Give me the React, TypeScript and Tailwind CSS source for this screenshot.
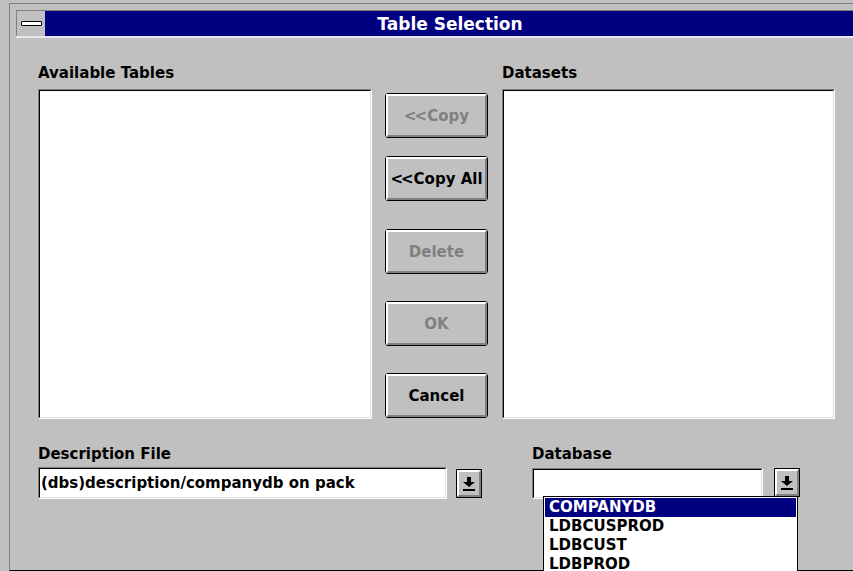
import React from 'react'

const buttons = [
  { label: 'Copy', arrows: true, enabled: false, gap: 'mt-0' },
  { label: 'Copy All', arrows: true, enabled: true, gap: 'mt-[18px]' },
  { label: 'Delete', arrows: false, enabled: false, gap: 'mt-[28px]' },
  { label: 'OK', arrows: false, enabled: false, gap: 'mt-[27px]' },
  { label: 'Cancel', arrows: false, enabled: true, gap: 'mt-[27px]' },
]

const databases = ['COMPANYDB', 'LDBCUSPROD', 'LDBCUST', 'LDBPROD']

// sunken 3D frame used by list boxes and edit fields
const Sunken = ({ className, children }: { className: string; children?: React.ReactNode }) => (
  <div className={`border border-t-[#808080] border-l-[#808080] border-r-white border-b-white ${className}`}>
    <div className="h-full w-full border border-t-black border-l-black border-r-[#dfdfdf] border-b-[#dfdfdf] bg-white">
      {children}
    </div>
  </div>
)

const PushButton = ({
  label,
  arrows,
  enabled,
  gap,
}: {
  label: string
  arrows: boolean
  enabled: boolean
  gap: string
}) => (
  <div className={`h-[45px] w-[103px] rounded-[3px] border border-black ${gap}`}>
    <div className="flex h-full items-center justify-center border-2 border-t-white border-l-white border-r-[#808080] border-b-[#808080]">
      <span className={enabled ? 'text-black' : 'text-[#808080]'}>
        {arrows && <span className="tracking-[-2px]">{'<<'}</span>}
        {arrows && <span className="inline-block w-[2px]" />}
        {label}
      </span>
    </div>
  </div>
)

const DropButton = () => (
  <div className="h-[29px] w-[26px] border border-black">
    <div className="flex h-full items-center justify-center border-2 border-t-white border-l-white border-r-[#808080] border-b-[#808080] bg-[#c0c0c0]">
      <svg width="12" height="14" viewBox="0 0 12 14">
        <rect x="4" y="0" width="4" height="5" fill="#000" />
        <polygon points="0,5 12,5 6,10" fill="#000" />
        <rect x="0" y="12" width="12" height="2" fill="#000" />
      </svg>
    </div>
  </div>
)

export default function App() {
  return (
    <div className="h-[571px] w-[853px] overflow-hidden bg-[#c0c0c0] pl-[9px] pt-[3px] font-['DejaVu_Sans',sans-serif] text-[15px] font-bold leading-[20px] text-black">
      <div className="relative flex h-[568px] w-[852px] flex-col border-b border-l border-t border-[#808080] border-b-black">
        {/* caption */}
        <div className="ml-[6px] mr-[6px] mt-[6px] flex h-[28px] border-t border-[#808080] border-b-2 border-b-[#e8e8f0]">
          <div className="flex w-[29px] items-center justify-center border-l border-[#808080] bg-[#c0c0c0]">
            <div className="h-[5px] w-[21px] rounded-[1px] border border-black bg-white" />
          </div>
          <div className="flex flex-1 items-center justify-center bg-[#000080] text-[17px] text-white">
            Table Selection
          </div>
        </div>

        <div className="flex-1 pl-[28px] pt-[25px]">
          <div className="flex items-start">
            <div className="w-[334px]">
              <div className="h-[20px]">Available Tables</div>
              <Sunken className="mt-[6px] h-[330px] w-full" />
            </div>
            <div className="ml-[13px] flex w-[103px] flex-col pt-[30px]">
              {buttons.map((b) => (
                <PushButton key={b.label} {...b} />
              ))}
            </div>
            <div className="ml-[14px] w-[333px]">
              <div className="h-[20px]">Datasets</div>
              <Sunken className="mt-[6px] h-[330px] w-full" />
            </div>
          </div>

          <div className="mt-[25px] flex items-start">
            <div>
              <div className="h-[20px]">Description File</div>
              <div className="mt-[3px] flex items-start">
                <Sunken className="h-[32px] w-[409px]">
                  <div className="flex h-full items-center pl-[1px]">(dbs)description/companydb on pack</div>
                </Sunken>
                <div className="ml-[9px] mt-[2px]">
                  <DropButton />
                </div>
              </div>
            </div>
            <div className="ml-[50px]">
              <div className="h-[20px]">Database</div>
              <div className="relative mt-[4px] flex items-start">
                <Sunken className="h-[31px] w-[231px]" />
                <div className="ml-[11px]">
                  <DropButton />
                </div>
                <div className="absolute left-[11px] top-[28px] z-10 w-[255px] border border-black bg-white p-[1px]">
                  {databases.map((d, i) => (
                    <div
                      key={d}
                      className={`h-[19px] pl-[4px] leading-[19px] ${i === 0 ? 'bg-[#000080] text-white' : 'text-black'}`}
                    >
                      {d}
                    </div>
                  ))}
                </div>
              </div>
            </div>
          </div>
        </div>
      </div>
    </div>
  )
}
